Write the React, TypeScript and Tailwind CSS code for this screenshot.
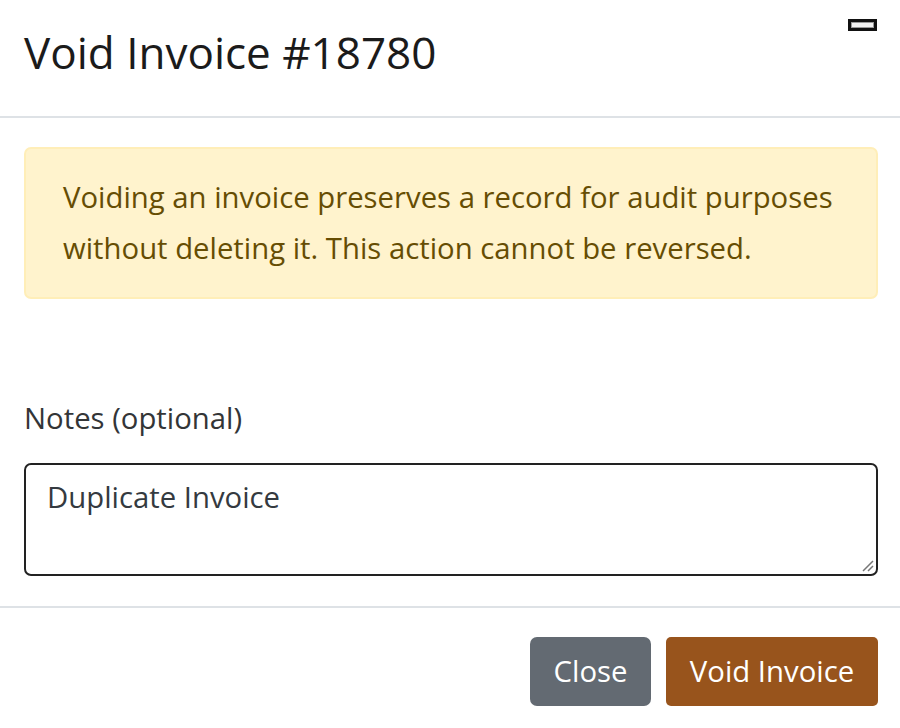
import React from "react";

const font = { fontFamily: '"Open Sans", "Noto Sans", sans-serif' };

function CloseGlyph() {
  return (
    <div className="absolute right-[23px] top-[19px] h-[12px] w-[29px] border-[3px] border-[#111] bg-[#f2f2f2] shadow-[inset_0_0_0_1px_#999]" />
  );
}

export default function App() {
  return (
    <div className="min-h-[728px] w-[900px] bg-white" style={font}>
      {/* Header */}
      <div className="relative border-b-2 border-[#dee2e6] pl-[24px] pr-[22px] pt-[26px] pb-[37px]">
        <h2 className="text-[44px] leading-[53px] font-normal text-[#1b1b1b]">Void Invoice #18780</h2>
        <CloseGlyph />
      </div>

      {/* Body */}
      <div className="pl-[24px] pr-[22px] pt-[29px] pb-[30px]">
        <div className="rounded-[7px] border-2 border-[#ffeeb8] bg-[#fff3cd] pl-[37px] pr-[30px] pt-[23px] pb-[23px] text-[29.3px] leading-[51px] text-[#664d03]">
          Voiding an invoice preserves a record for audit purposes without deleting it. This action cannot be reversed.
        </div>

        <label className="mt-[94px] block text-[29.3px] leading-[51px] text-[#333537]">Notes (optional)</label>

        <div className="relative mt-[19px] h-[113px] rounded-[7px] border-2 border-[#222] pl-[21px] pt-[7px] text-[29.3px] leading-[51px] text-[#343a40]">
          Duplicate Invoice
          <svg className="absolute bottom-[2px] right-[2px]" width="14" height="14" viewBox="0 0 14 14">
            <path d="M3 13 L13 3 M8 13 L13 8" stroke="#777" strokeWidth="1.5" />
          </svg>
        </div>
      </div>

      {/* Footer */}
      <div className="flex justify-end gap-[15px] border-t-2 border-[#dee2e6] pl-[24px] pr-[22px] pt-[29px]">
        <button className="h-[69px] w-[121px] rounded-[7px] bg-[#636a72] text-[29.3px] text-white">Close</button>
        <button className="h-[69px] w-[212px] rounded-[5px] bg-[#98541c] text-[29.3px] text-white">Void Invoice</button>
      </div>
    </div>
  );
}
